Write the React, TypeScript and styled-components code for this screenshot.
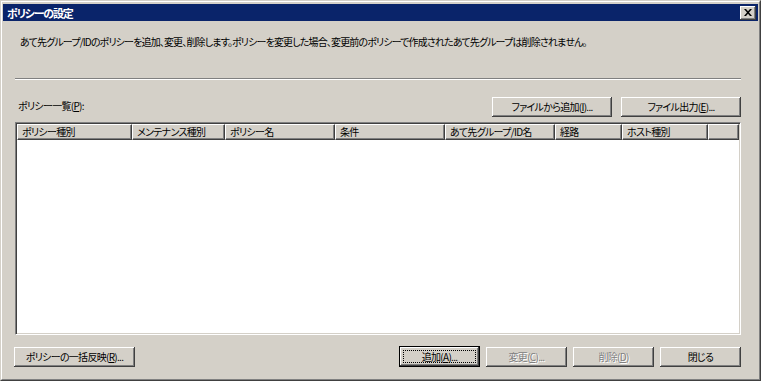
import React from "react";
import styled, { createGlobalStyle } from "styled-components";

const Global = createGlobalStyle`
  html, body { margin: 0; padding: 0; background: #d4d0c8; }
  #root { width: 761px; height: 381px; }
`;

const FONT = `"Noto Sans CJK JP", "MS UI Gothic", sans-serif`;

const Window = styled.div`
  box-sizing: border-box;
  width: 761px;
  height: 381px;
  background: #d4d0c8;
  border-top: 1px solid #d4d0c8;
  border-left: 1px solid #d4d0c8;
  border-right: 1px solid #404040;
  border-bottom: 1px solid #404040;
  display: flex;
  font-family: ${FONT};
  font-size: 10px;
  font-feature-settings: "palt";
  letter-spacing: -0.7px;
  color: #000;
`;

const Frame = styled.div`
  flex: 1;
  display: flex;
  flex-direction: column;
  border-top: 1px solid #fff;
  border-left: 1px solid #fff;
  border-right: 1px solid #808080;
  border-bottom: 1px solid #808080;
  padding: 1px;
`;

const TitleBar = styled.div`
  height: 17px;
  margin-top: 1px;
  background: #0a246a;
  display: flex;
  align-items: center;
  justify-content: space-between;
  padding: 0 2px 0 4px;
`;

const Title = styled.span`
  color: #fff;
  font-weight: bold;
  font-size: 11px;
  letter-spacing: -1.2px;
`;

const CloseButton = styled.div`
  box-sizing: border-box;
  width: 16px;
  height: 14px;
  background: #d4d0c8;
  box-shadow: inset -1px -1px #404040, inset 1px 1px #fff, inset -2px -2px #808080;
  display: flex;
  align-items: center;
  justify-content: center;
`;

const Content = styled.div`
  flex: 1;
  display: flex;
  flex-direction: column;
  padding: 0 17px 0 12px;
`;

const Description = styled.div`
  margin-top: 15px;
  padding-left: 5px;
  height: 12px;
  line-height: 12px;
  white-space: nowrap;
  letter-spacing: -0.85px;
`;

const Separator = styled.div`
  margin-top: 30px;
  height: 0;
  border-top: 1px solid #808080;
  border-bottom: 1px solid #fff;
`;

const ListToolbar = styled.div`
  margin-top: 17px;
  height: 20px;
  display: flex;
  align-items: center;
  gap: 9px;
`;

const Label = styled.span`
  flex: 1;
  padding: 0 0 3px 3px;
`;

const Button = styled.button<{ $w: number; $disabled?: boolean; $default?: boolean }>`
  position: relative;
  box-sizing: border-box;
  width: ${(p) => p.$w}px;
  height: ${(p) => (p.$default ? 21 : 20)}px;
  padding: 0;
  margin: 0;
  border: ${(p) => (p.$default ? "1px solid #000" : "none")};
  background: #d4d0c8;
  box-shadow: inset -1px -1px #404040, inset 1px 1px #fff, inset -2px -2px #808080;
  font-family: ${FONT};
  font-size: 10px;
  font-feature-settings: "palt";
  letter-spacing: -0.7px;
  color: ${(p) => (p.$disabled ? "#808080" : "#000")};
  text-shadow: ${(p) => (p.$disabled ? "1px 1px 0 #fff" : "none")};
  line-height: 18px;
  white-space: nowrap;
  cursor: default;
  u { text-decoration: underline; text-underline-offset: 1px; }
`;

const FocusRing = styled.span`
  position: absolute;
  inset: 3px;
  border: 1px dotted #000;
  pointer-events: none;
`;

const ListView = styled.div`
  margin-top: 5px;
  height: 213px;
  box-sizing: border-box;
  background: #fff;
  border-top: 1px solid #808080;
  border-left: 1px solid #808080;
  border-right: 1px solid #fff;
  border-bottom: 1px solid #fff;
  box-shadow: inset 1px 1px #404040, inset -1px -1px #d4d0c8;
  padding: 1px;
  display: flex;
  flex-direction: column;
`;

const HeaderRow = styled.div`
  display: flex;
  height: 16px;
`;

const HeaderCell = styled.div<{ $w?: number }>`
  box-sizing: border-box;
  ${(p) => (p.$w ? `width: ${p.$w}px; flex: none;` : "flex: 1;")}
  height: 16px;
  background: #d4d0c8;
  border-top: 1px solid #fff;
  border-left: 1px solid #fff;
  border-right: 1px solid #404040;
  border-bottom: 1px solid #404040;
  box-shadow: inset -1px -1px #808080;
  padding-left: 4px;
  line-height: 13px;
  white-space: nowrap;
  overflow: hidden;
`;

const ButtonRow = styled.div`
  margin-top: 11px;
  margin-left: -1px;
  display: flex;
  align-items: center;
  gap: 6px;
`;

const Spacer = styled.div`
  flex: 1;
`;

const columns: [string, number][] = [
  ["ポリシー種別", 115],
  ["メンテナンス種別", 93],
  ["ポリシー名", 110],
  ["条件", 110],
  ["あて先グループ/ID名", 110],
  ["経路", 67],
  ["ホスト種別", 86],
];

export default function App() {
  return (
    <>
      <Global />
      <Window>
        <Frame>
          <TitleBar>
            <Title>ポリシーの設定</Title>
            <CloseButton>
              <svg width="8" height="7" viewBox="0 0 8 7">
                <path d="M0 0h2l2 2.3L6 0h2L5 3.5 8 7H6L4 4.7 2 7H0l3-3.5z" fill="#000" />
              </svg>
            </CloseButton>
          </TitleBar>
          <Content>
            <Description>
              あて先グループ/IDのポリシーを追加、変更、削除します。ポリシーを変更した場合、変更前のポリシーで作成されたあて先グループは削除されません。
            </Description>
            <Separator />
            <ListToolbar>
              <Label>
                ポリシー一覧(<u>P</u>):
              </Label>
              <Button $w={120}>
                ファイルから追加(<u>I</u>)...
              </Button>
              <Button $w={120}>
                ファイル出力(<u>E</u>)...
              </Button>
            </ListToolbar>
            <ListView>
              <HeaderRow>
                {columns.map(([name, w]) => (
                  <HeaderCell key={name} $w={w}>
                    {name}
                  </HeaderCell>
                ))}
                <HeaderCell />
              </HeaderRow>
            </ListView>
            <ButtonRow>
              <Button $w={121}>
                ポリシーの一括反映(<u>R</u>)...
              </Button>
              <Spacer />
              <Button $w={81} $default>
                追加(<u>A</u>)...
                <FocusRing />
              </Button>
              <Button $w={81} $disabled>
                変更(<u>C</u>)...
              </Button>
              <Button $w={81} $disabled>
                削除(<u>D</u>)
              </Button>
              <Button $w={81}>閉じる</Button>
            </ButtonRow>
          </Content>
        </Frame>
      </Window>
    </>
  );
}
